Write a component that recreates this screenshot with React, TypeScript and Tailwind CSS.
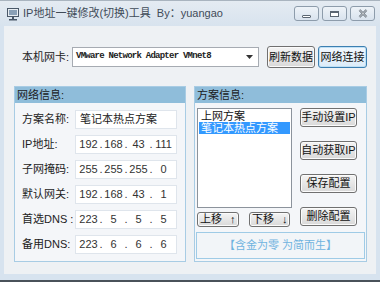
import clsx from "clsx";
import type { ReactNode } from "react";

const FONT = "font-['Liberation_Sans','Noto_Sans_CJK_SC',sans-serif]";

function Btn({
  children,
  className,
  focused,
}: {
  children: ReactNode;
  className?: string;
  focused?: boolean;
}) {
  return (
    <div
      className={clsx(
        "flex items-center justify-center whitespace-nowrap rounded-[3px] border text-[11px] leading-none text-[#111]",
        focused
          ? "border-[#3c7fb1] bg-gradient-to-b from-[#f2f8fd] to-[#dcecf9] shadow-[inset_0_0_0_1px_#bfe0f5]"
          : "border-[#707070] bg-gradient-to-b from-[#f4f4f4] to-[#d9d9d9] shadow-[inset_0_0_0_1px_#fbfbfb]",
        className,
      )}
    >
      {children}
    </div>
  );
}

function IpBox({ parts }: { parts: string[] }) {
  return (
    <div className="flex h-[19px] w-[102px] items-center border border-[#dfe5ec] bg-white pl-[3px] font-['Liberation_Sans',sans-serif] text-[11px] text-[#333]">
      {parts.map((p, i) => (
        <div key={i} className="flex items-center">
          <span className="w-[19px] text-center">{p}</span>
          {i < 3 && <span className="w-[6px] text-center">.</span>}
        </div>
      ))}
    </div>
  );
}

function Row({ label, children }: { label: string; children: ReactNode }) {
  return (
    <div className="flex h-[19px] items-center">
      <div className="w-[60px] whitespace-nowrap pl-[7px] text-[11px] leading-none text-[#222]">
        {label}
      </div>
      {children}
    </div>
  );
}

function GroupHeader({ title }: { title: string }) {
  return (
    <div className="flex h-[16px] items-center bg-[#8fbdda] pl-[2px] text-[11px] leading-none text-[#1a1a1a]">
      {title}
    </div>
  );
}

function CtrlButton({ children }: { children: ReactNode }) {
  return (
    <div className="flex h-[15px] w-[25px] items-center justify-center rounded-[3px] border border-[#8d9cab] bg-gradient-to-b from-[#eef3f8] to-[#d9e3ee]">
      {children}
    </div>
  );
}

export default function App() {
  return (
    <div
      className={clsx(
        "flex h-[282px] w-[380px] flex-col overflow-hidden bg-[#d7e3ef]",
        FONT,
      )}
    >
      {/* title bar */}
      <div className="flex h-[26px] shrink-0 items-center border-t border-[#a9b4bf] bg-gradient-to-b from-[#e4ebf2] to-[#d8e3ee]">
        <svg width="12" height="13" viewBox="0 0 12 13" className="ml-[7px] mt-[1px]">
          <rect x="0.5" y="0.5" width="11" height="8" fill="#e8edf2" stroke="#4a5868" />
          <rect x="2" y="2" width="8" height="5" fill="#8aa0b6" />
          <rect x="5" y="9" width="2" height="2" fill="#4a5868" />
          <rect x="2" y="11" width="8" height="1.5" fill="#4a5868" />
        </svg>
        <span className="ml-[4px] whitespace-nowrap text-[11px] leading-none text-[#3f4b58]">
          IP地址一键修改(切换)工具&nbsp;&nbsp;By：yuangao
        </span>
        <div className="ml-auto mr-[5px] flex gap-[3px]">
          <CtrlButton>
            <div className="mt-[5px] h-[3px] w-[9px] rounded-[1px] border border-[#5b6672] bg-white" />
          </CtrlButton>
          <CtrlButton>
            <div className="h-[6px] w-[9px] border border-t-2 border-[#5b6672] bg-white" />
          </CtrlButton>
          <CtrlButton>
            <svg width="10" height="9" viewBox="0 0 10 9">
              <path d="M1.5 1 L8.5 8 M8.5 1 L1.5 8" stroke="#5b6672" strokeWidth="2.2" />
              <path d="M1.5 1 L8.5 8 M8.5 1 L1.5 8" stroke="#ffffff" strokeWidth="0.8" />
            </svg>
          </CtrlButton>
        </div>
      </div>

      {/* client area */}
      <div className="mx-[4px] flex h-[248px] shrink-0 flex-col bg-[#eef1f4] pl-[10px] pr-[7px] pt-[20px]">
        <div className="flex h-[22px] items-center">
          <div className="w-[58px] whitespace-nowrap pl-[8px] text-[11px] leading-none text-[#222]">
            本机网卡:
          </div>
          <div className="flex h-[20px] w-[187px] items-center overflow-hidden border border-[#a6abb2] bg-white pl-[3px]">
            <span className="whitespace-nowrap font-['Liberation_Mono',monospace] text-[9px] font-bold tracking-[-0.75px] text-[#222]">
              VMware Network Adapter VMnet8
            </span>
            <svg width="7" height="4" viewBox="0 0 7 4" className="ml-auto mr-[5px] shrink-0">
              <path d="M0 0 H7 L3.5 4 Z" fill="#333" />
            </svg>
          </div>
          <Btn className="ml-[8px] h-[22px] w-[48px]">刷新数据</Btn>
          <Btn focused className="ml-[3px] h-[22px] w-[49px]">
            网络连接
          </Btn>
        </div>

        <div className="mt-[18px] flex gap-[8px]">
          {/* left group */}
          <div className="h-[176px] w-[172px] border border-[#a8cce4] bg-[#f4f6f9]">
            <GroupHeader title="网络信息:" />
            <div className="flex flex-col gap-[6px] pt-[7px]">
              <Row label="方案名称:">
                <div className="flex h-[19px] w-[102px] items-center whitespace-nowrap border border-[#dfe5ec] bg-white pl-[4px] text-[11px] leading-none text-[#222]">
                  笔记本热点方案
                </div>
              </Row>
              <Row label="IP地址:">
                <IpBox parts={["192", "168", "43", "111"]} />
              </Row>
              <Row label="子网掩码:">
                <IpBox parts={["255", "255", "255", "0"]} />
              </Row>
              <Row label="默认网关:">
                <IpBox parts={["192", "168", "43", "1"]} />
              </Row>
              <Row label="首选DNS :">
                <IpBox parts={["223", "5", "5", "5"]} />
              </Row>
              <Row label="备用DNS:">
                <IpBox parts={["223", "6", "6", "6"]} />
              </Row>
            </div>
          </div>

          {/* right group */}
          <div className="flex h-[176px] w-[173px] flex-col border border-[#a8cce4] bg-[#f4f6f9]">
            <GroupHeader title="方案信息:" />
            <div className="mt-[5px] flex">
              <div className="ml-[2px] flex flex-col">
                <div className="h-[100px] w-[95px] border border-[#8c939c] bg-white p-[1px] text-[11px] leading-[12px]">
                  <div className="h-[12px] whitespace-nowrap pl-[2px] text-[#111]">上网方案</div>
                  <div className="h-[12px] whitespace-nowrap bg-[#3399ff] pl-[2px] text-white">
                    笔记本热点方案
                  </div>
                </div>
                <div className="mt-[4px] flex gap-[10px]">
                  <Btn className="h-[15px] w-[42px] justify-start gap-[8px] rounded-[2px] pl-[2px]">
                    <span>上移</span>
                    <span className="text-[11px] font-bold">↑</span>
                  </Btn>
                  <Btn className="h-[15px] w-[41px] justify-start gap-[8px] rounded-[2px] pl-[2px]">
                    <span>下移</span>
                    <span className="text-[11px] font-bold">↓</span>
                  </Btn>
                </div>
              </div>
              <div className="ml-[8px] flex flex-col gap-[14px]">
                <Btn className="h-[19px] w-[57px]">手动设置IP</Btn>
                <Btn className="h-[19px] w-[57px]">自动获取IP</Btn>
                <Btn className="h-[19px] w-[57px]">保存配置</Btn>
                <Btn className="h-[19px] w-[57px]">删除配置</Btn>
              </div>
            </div>
            <div className="mx-[1px] mt-[5px] flex h-[27px] items-center justify-center whitespace-nowrap border border-[#9fcbe6] bg-[#f2f5f8] text-[11px] leading-none text-[#6fb3df]">
              【含金为零 为简而生】
            </div>
          </div>
        </div>
      </div>

      {/* bottom frame */}
      <div className="flex-1" />
      <div className="h-[2px] shrink-0 bg-[#4a525a]" />
    </div>
  );
}
